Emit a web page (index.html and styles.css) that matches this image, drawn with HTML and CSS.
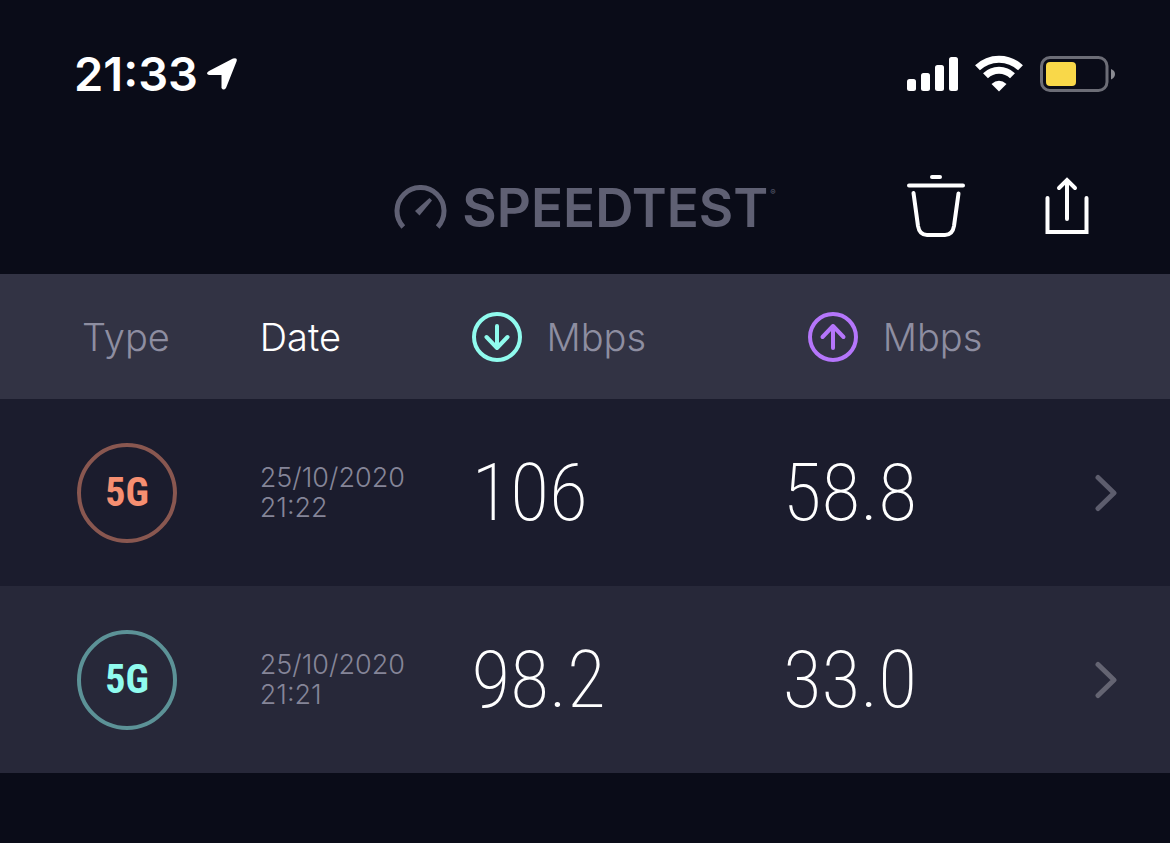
FILE: index.html
```html
<!DOCTYPE html>
<html lang="en">
<head>
<meta charset="utf-8">
<meta name="viewport" content="width=device-width, initial-scale=1">
<title>Speedtest results</title>
<link rel="stylesheet" href="styles.css">
</head>
<body>
<div class="status">
  <div class="status-left">
    <time class="clock">21:33</time>
    <svg width="32" height="34" viewBox="0 0 32 34" aria-hidden="true"><path d="M3 14 27 1.500Q32 0 30.500 4.500L20 31Q17.500 34 15.500 31V18H3Q-1 16.500 3 14Z" fill="#fff"/></svg>
  </div>
  <div class="status-right">
    <svg width="52" height="36" viewBox="0 0 52 36" aria-hidden="true" fill="#fff"><rect x="1" y="23" width="9" height="12" rx="2.500"/><rect x="15" y="17" width="9" height="18" rx="2.500"/><rect x="29" y="9" width="9" height="26" rx="2.500"/><rect x="43" y="1" width="9" height="34" rx="2.500"/></svg>
    <svg width="50" height="38" viewBox="0 0 50 38" aria-hidden="true"><g fill="none" stroke="#fff" stroke-width="7"><path d="M3.500 12.800A31 31 0 0 1 46.500 12.800"/><path d="M11.500 20.700A19.300 19.300 0 0 1 38.500 20.700"/></g><path d="M25 36.500 17.500 29Q25 22.500 32.500 29Z" fill="#fff"/></svg>
    <svg width="76" height="38" viewBox="0 0 76 38" aria-hidden="true"><rect x="1.500" y="2.500" width="65.500" height="33" rx="8.500" fill="none" stroke="#6c6d76" stroke-width="3"/><rect x="6" y="7" width="30" height="24" rx="4" fill="#f9d849"/><path d="M71 14Q75 15.500 75 19T71 24.500Z" fill="#8a8b92"/></svg>
  </div>
</div>
<header class="nav">
  <h1 class="logo">
    <svg width="54" height="46" viewBox="0 0 54 46" aria-hidden="true"><path d="M9.300 42A23.500 23.500 0 1 1 43.700 42" fill="none" stroke="#5f6073" stroke-width="5"/><path d="M35.500 13 38 15.500 25.500 30.500 21 26Z" fill="#5f6073"/></svg>
    <span class="word">SPEEDTEST</span><sup class="mark">®</sup>
  </h1>
  <div class="actions">
    <button class="icon-button" type="button" aria-label="Delete results">
      <svg width="58" height="64" viewBox="0 0 58 64" fill="none" stroke="#fff" stroke-width="4" stroke-linecap="round" stroke-linejoin="round"><path d="M25 3H33M2 11.500H56M6.500 19 11 52Q12.500 61 20 61H38Q45.500 61 47 52L51.500 19.500"/></svg>
    </button>
    <button class="icon-button" type="button" aria-label="Share results">
      <svg width="44" height="58" viewBox="0 0 44 58" fill="none" stroke="#fff" stroke-width="4" stroke-linecap="round" stroke-linejoin="miter"><path d="M2.500 21V55H41.500V21M22 42V4M14 11 22 3 30 11"/></svg>
    </button>
  </div>
</header>
<main>
  <table class="results">
    <colgroup><col class="c-type"><col class="c-date"><col class="c-down"><col class="c-up"><col></colgroup>
    <thead>
      <tr>
        <th class="type" scope="col">Type</th>
        <th class="sorted" scope="col">Date</th>
        <th scope="col"><div class="unit"><svg width="50" height="50" viewBox="0 0 50 50" role="img" aria-label="Download" fill="none" stroke="#90fbee" stroke-width="4" stroke-linecap="round" stroke-linejoin="round"><circle cx="25" cy="25" r="23"/><path d="M25 14V36M14.500 25 25 36 35.500 25"/></svg>Mbps</div></th>
        <th class="up" scope="col"><div class="unit"><svg width="50" height="50" viewBox="0 0 50 50" role="img" aria-label="Upload" fill="none" stroke="#b576fb" stroke-width="4" stroke-linecap="round" stroke-linejoin="round"><circle cx="25" cy="25" r="23"/><path d="M25 36V14M14.500 25 25 14 35.500 25"/></svg>Mbps</div></th>
        <th></th>
      </tr>
    </thead>
    <tbody>
      <tr>
        <td class="net"><span class="badge coral">5G</span></td>
        <td class="when">25/10/2020<br>21:22</td>
        <td class="speed">106</td>
        <td class="speed">58.8</td>
        <td class="go"><button class="icon-button" type="button" aria-label="Open result from 21:22"><svg width="24" height="38" viewBox="0 0 24 38" fill="none" stroke="#5d5d6d" stroke-width="5" stroke-linecap="round" stroke-linejoin="round"><path d="M4 3.500 20 19 4 34.500"/></svg></button></td>
      </tr>
      <tr>
        <td class="net"><span class="badge aqua">5G</span></td>
        <td class="when">25/10/2020<br>21:21</td>
        <td class="speed">98.2</td>
        <td class="speed">33.0</td>
        <td class="go"><button class="icon-button" type="button" aria-label="Open result from 21:21"><svg width="24" height="38" viewBox="0 0 24 38" fill="none" stroke="#646472" stroke-width="5" stroke-linecap="round" stroke-linejoin="round"><path d="M4 3.500 20 19 4 34.500"/></svg></button></td>
      </tr>
    </tbody>
  </table>
</main>
</body>
</html>
```
FILE: styles.css
```css
* {
  box-sizing: border-box;
}

body {
  margin: 0;
  background: #0a0c18;
  color: #fff;
  font-family: Inter, "Liberation Sans", sans-serif;
}

svg {
  display: block;
  flex: none;
}

.status {
  display: flex;
  justify-content: space-between;
  align-items: center;
  height: 148px;
  padding: 0 54px 0 74px;
}

.status-left {
  display: flex;
  align-items: center;
  gap: 8px;
}

.status-right {
  display: flex;
  align-items: center;
  gap: 16px;
}

.clock {
  font-size: 47px;
  font-weight: 600;
  line-height: 56px;
}

.nav {
  display: grid;
  grid-template-columns: 1fr auto 1fr;
  align-items: center;
  height: 126px;
  padding: 0 81px 10px;
}

.logo {
  grid-column: 2;
  display: flex;
  align-items: center;
  margin: 0;
  padding-top: 3px;
  color: #5f6073;
}

.word {
  margin-left: 14px;
  font-size: 53px;
  font-weight: 600;
  line-height: 60px;
}

.mark {
  align-self: flex-start;
  padding: 8px 0 0 2px;
  font-size: 8px;
  font-weight: 400;
  line-height: 12px;
}

.actions {
  display: flex;
  justify-content: flex-end;
  align-items: center;
  gap: 80px;
}

.icon-button {
  padding: 0;
  border: 0;
  background: none;
}

.results {
  width: 100%;
  table-layout: fixed;
  border-collapse: collapse;
}

.c-type {
  width: 22.2%;
}

.c-date {
  width: 18.1%;
}

.c-down {
  width: 26.6%;
}

.c-up {
  width: 24%;
}

th,
td {
  padding: 0;
  text-align: left;
}

th {
  height: 125px;
  background: #323344;
  color: #8e8ea1;
  font-size: 38px;
  font-weight: 300;
}

th.type {
  padding-left: 82px;
}

th.up {
  padding-left: 25px;
}

th.sorted {
  color: #fff;
}

.unit {
  display: flex;
  align-items: center;
  gap: 25px;
}

td {
  height: 187px;
  background: #1b1c2d;
}

tr:nth-child(even) td {
  background: #272839;
}

.net {
  padding-left: 77px;
}

.badge {
  display: flex;
  align-items: center;
  justify-content: center;
  width: 100px;
  height: 100px;
  border: 4px solid;
  border-radius: 50%;
  font-family: "Roboto Condensed", Roboto, sans-serif;
  font-size: 40px;
  font-weight: 700;
}

.coral {
  border-color: #895750;
  color: #f68f71;
}

.aqua {
  border-color: #5c9297;
  color: #90fbee;
}

.when {
  color: #858598;
  font-size: 27px;
  font-weight: 300;
  line-height: 30px;
}

.speed {
  font-family: "Roboto Condensed", Roboto, sans-serif;
  font-size: 80px;
  font-weight: 200;
  line-height: 120px;
}

.go {
  padding-right: 52px;
}

.go .icon-button {
  display: block;
  margin-left: auto;
}
```
